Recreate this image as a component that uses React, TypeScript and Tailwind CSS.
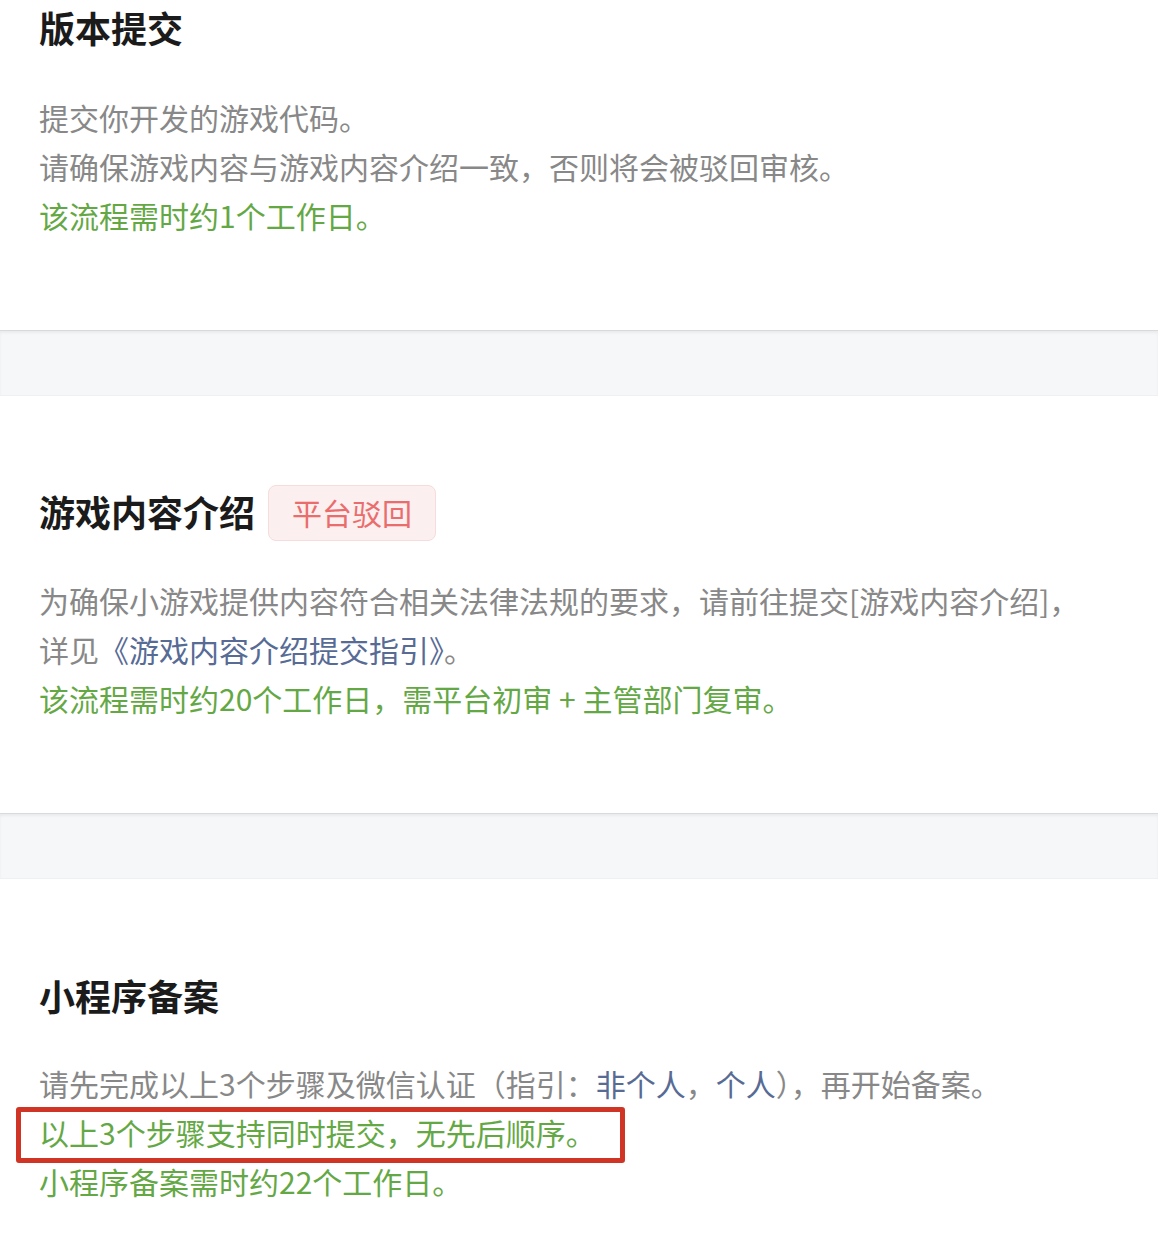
import React from "react";

const font = { fontFamily: '"Noto Sans CJK SC", "Noto Sans", sans-serif' };

function Band() {
  return (
    <div className="h-[66px] bg-[#f6f7f9] border-t border-[#d9dadb] border-b border-b-[#eff0f2] shadow-[inset_0_2px_3px_rgba(0,0,0,0.05)]" />
  );
}

export default function App() {
  return (
    <div className="w-[1158px] min-h-[1238px] bg-white text-[30px] leading-[49px] text-[#888888]" style={font}>
      <section className="px-[39px] pt-[2px] pb-[90px]">
        <div className="flex items-center h-[56px]">
          <h2 className="text-[36px] font-bold text-[#1b1b1b] pb-[6px]">版本提交</h2>
        </div>
        <div className="mt-[35px] whitespace-nowrap">
          <p>提交你开发的游戏代码。</p>
          <p>请确保游戏内容与游戏内容介绍一致，否则将会被驳回审核。</p>
          <p className="text-[#64a845]">该流程需时约1个工作日。</p>
        </div>
      </section>
      <Band />
      <section className="px-[39px] pt-[89px] pb-[90px]">
        <div className="flex items-center h-[56px]">
          <h2 className="text-[36px] font-bold text-[#1b1b1b] pb-[4px]">游戏内容介绍</h2>
          <span className="ml-[13px] h-[56px] flex items-center px-[23px] rounded-[8px] bg-[#fcefef] border border-[#f7dcdc] text-[#ea6d6d] text-[30px] pb-[2px]">
            平台驳回
          </span>
        </div>
        <div className="mt-[35px] whitespace-nowrap">
          <p>为确保小游戏提供内容符合相关法律法规的要求，请前往提交[游戏内容介绍]，</p>
          <p>
            详见<span className="text-[#576b95]">《游戏内容介绍提交指引》</span>。
          </p>
          <p className="text-[#64a845]">该流程需时约20个工作日，需平台初审 + 主管部门复审。</p>
        </div>
      </section>
      <Band />
      <section className="px-[39px] pt-[89px] pb-[30px]">
        <div className="flex items-center h-[56px]">
          <h2 className="text-[36px] font-bold text-[#1b1b1b] pb-[2px]">小程序备案</h2>
        </div>
        <div className="mt-[35px] whitespace-nowrap">
          <p>
            请先完成以上3个步骤及微信认证（指引：<span className="text-[#576b95]">非个人</span>，
            <span className="text-[#576b95]">个人</span>），再开始备案。
          </p>
          <p className="relative text-[#64a845]">
            以上3个步骤支持同时提交，无先后顺序。
            <span className="absolute left-[-23px] top-[-1px] w-[609px] h-[56px] border-[5px] border-[#cf3424] rounded-[3px]" />
          </p>
          <p className="text-[#64a845]">小程序备案需时约22个工作日。</p>
        </div>
      </section>
    </div>
  );
}
